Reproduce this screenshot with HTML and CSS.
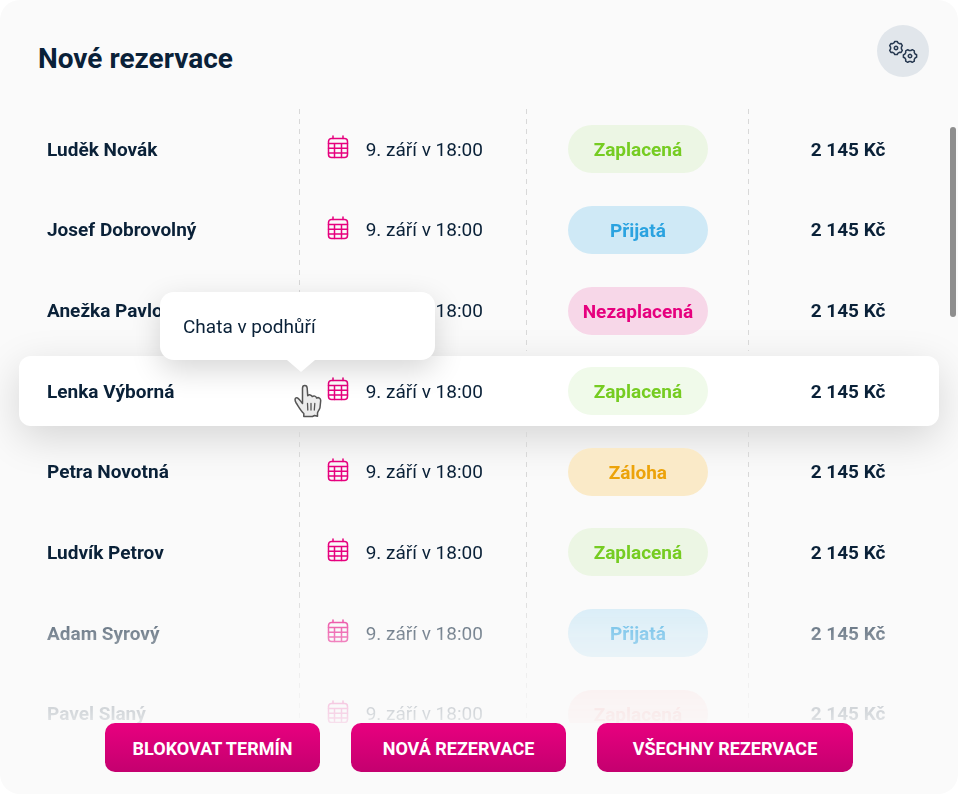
FILE: index.html
```html
<!DOCTYPE html>
<html lang="cs">
<head>
    <meta charset="UTF-8">
    <meta name="viewport" content="width=device-width, initial-scale=1.0">
    <title>Nové rezervace</title>
    <link rel="stylesheet" href="styles.css">
</head>
<body>

<!-- Shared icons -->
<svg class="sprite" aria-hidden="true">
    <symbol id="calendar" viewBox="0 0 22 24">
        <g fill="none" stroke="currentColor" stroke-width="1.5" stroke-linecap="round">
            <rect x="1.5" y="3.5" width="19" height="19" rx="3"/>
            <path d="M6 1v2.5M16 1v2.5M1.5 8.5h19M1.5 13.2h19M1.5 17.9h19M7.5 8.5v14M14.5 8.5v14"/>
        </g>
    </symbol>
    <symbol id="gear" viewBox="-8 -8 16 16">
        <path fill="none" stroke="currentColor" stroke-width="1.5" stroke-linejoin="round" d="M-1.2-6.6H1.2L2-5.1 3.4-4.3 5.1-4.4 6.3-2.3 5.4-.8V.8L6.3 2.3 5.1 4.4 3.4 4.3 2 5.1 1.2 6.6H-1.2L-2 5.1-3.4 4.3-5.1 4.4-6.3 2.3-5.4 .8V-.8L-6.3-2.3-5.1-4.4-3.4-4.3-2-5.1Z"/>
        <circle r="1.7" fill="none" stroke="currentColor" stroke-width="1.5"/>
    </symbol>
</svg>

<main class="card">
    <header class="card-header">
        <h1>Nové rezervace</h1>
        <button class="settings" type="button" aria-label="Nastavení">
            <svg width="32" height="26" viewBox="0 0 32 26">
                <use href="#gear" x="1" y="2" width="16" height="16"/>
                <use href="#gear" x="1" y="2" width="16" height="16" transform="translate(23 18) rotate(30) translate(-9 -10)"/>
            </svg>
        </button>
    </header>

    <div class="list">
        <table class="reservations">
            <tbody>
                <tr>
                    <td class="name">Luděk Novák</td>
                    <td class="date"><div class="date-inner"><svg class="cal"><use href="#calendar"/></svg>9. září v 18:00</div></td>
                    <td class="state"><span class="pill paid">Zaplacená</span></td>
                    <td class="price">2 145 Kč</td>
                </tr>
                <tr>
                    <td class="name">Josef Dobrovolný</td>
                    <td class="date"><div class="date-inner"><svg class="cal"><use href="#calendar"/></svg>9. září v 18:00</div></td>
                    <td class="state"><span class="pill accepted">Přijatá</span></td>
                    <td class="price">2 145 Kč</td>
                </tr>
                <tr>
                    <td class="name">Anežka Pavlová</td>
                    <td class="date"><div class="date-inner"><svg class="cal"><use href="#calendar"/></svg>9. září v 18:00</div></td>
                    <td class="state"><span class="pill unpaid">Nezaplacená</span></td>
                    <td class="price">2 145 Kč</td>
                </tr>
                <tr class="active">
                    <td class="name">
                        Lenka Výborná
                        <div class="tooltip" role="tooltip">Chata v podhůří</div>
                        <svg class="hand" viewBox="0 0 28 34" aria-hidden="true">
                            <path fill="#ececec" stroke="#555" stroke-width="1.5" stroke-linejoin="round" d="M8.5 19.5V4.2C8.5 .6 13 .6 13.2 4.2L13.7 11.8C15 10.3 17.6 10.6 18.2 12.6 19.8 11.4 22.2 12 22.6 14 24.6 13 26.8 14.2 26.7 16.6L26 23.5C25.8 25.5 24 27 23.5 29V32.2L20.5 31.5 18.5 32.5H9.8V29.500C6.500 26.500 4.500 22.500 2.200 19 .2 15.800 1 13 3.600 14 5.400 14.800 6.800 17.800 8.500 19.500Z"/>
                            <path fill="none" stroke="#555" stroke-width="1.3" stroke-linecap="round" d="M13.5 19.5 13.8 26M17 19.3V26M20.8 19.5 20.3 26"/>
                        </svg>
                    </td>
                    <td class="date"><div class="date-inner"><svg class="cal"><use href="#calendar"/></svg>9. září v 18:00</div></td>
                    <td class="state"><span class="pill paid">Zaplacená</span></td>
                    <td class="price">2 145 Kč</td>
                </tr>
                <tr>
                    <td class="name">Petra Novotná</td>
                    <td class="date"><div class="date-inner"><svg class="cal"><use href="#calendar"/></svg>9. září v 18:00</div></td>
                    <td class="state"><span class="pill deposit">Záloha</span></td>
                    <td class="price">2 145 Kč</td>
                </tr>
                <tr>
                    <td class="name">Ludvík Petrov</td>
                    <td class="date"><div class="date-inner"><svg class="cal"><use href="#calendar"/></svg>9. září v 18:00</div></td>
                    <td class="state"><span class="pill paid">Zaplacená</span></td>
                    <td class="price">2 145 Kč</td>
                </tr>
                <tr>
                    <td class="name">Adam Syrový</td>
                    <td class="date"><div class="date-inner"><svg class="cal"><use href="#calendar"/></svg>9. září v 18:00</div></td>
                    <td class="state"><span class="pill accepted">Přijatá</span></td>
                    <td class="price">2 145 Kč</td>
                </tr>
                <tr>
                    <td class="name">Pavel Slaný</td>
                    <td class="date"><div class="date-inner"><svg class="cal"><use href="#calendar"/></svg>9. září v 18:00</div></td>
                    <td class="state"><span class="pill overdue">Zaplacená</span></td>
                    <td class="price">2 145 Kč</td>
                </tr>
            </tbody>
        </table>
        <div class="scroll-thumb"></div>
    </div>

    <footer class="actions">
        <button class="btn" type="button">Blokovat termín</button>
        <button class="btn" type="button">Nová rezervace</button>
        <button class="btn btn-wide" type="button">Všechny rezervace</button>
    </footer>
</main>

</body>
</html>
```
FILE: styles.css
```css
* {
    box-sizing: border-box;
}

body {
    margin: 0;
    background: #fff;
    color: #0a2138;
    font-family: Roboto, "Liberation Sans", sans-serif;
    font-size: 19px;
}

button {
    border: none;
    font-family: inherit;
    cursor: pointer;
}

.sprite {
    display: none;
}

.card {
    display: flex;
    flex-direction: column;
    height: 100vh;
    background: #fafafa;
    border-radius: 20px;
}

.card-header {
    display: flex;
    justify-content: space-between;
    align-items: flex-start;
    height: 107px;
    padding: 25px 29px 0 38px;
}

h1 {
    margin: 0;
    padding-top: 16px;
    font-size: 28px;
    line-height: 36px;
    font-weight: 700;
}

.settings {
    display: flex;
    align-items: center;
    justify-content: center;
    width: 52px;
    height: 52px;
    padding: 0;
    border-radius: 50%;
    background: #e1e6eb;
    color: #263850;
}

/* Reservation list */
.list {
    position: relative;
    flex: 1;
    min-height: 0;
    overflow: hidden;
    padding: 2px 19px 0;
    -webkit-mask-image: linear-gradient(#000 470px, rgba(0, 0, 0, 0.5) 530px, rgba(0, 0, 0, 0.1) 616px);
    mask-image: linear-gradient(#000 470px, rgba(0, 0, 0, 0.5) 530px, rgba(0, 0, 0, 0.1) 616px);
}

.reservations {
    width: 100%;
    height: 645px;
    border-collapse: collapse;
    table-layout: fixed;
}

td {
    padding: 0;
    white-space: nowrap;
}

td + td {
    background: repeating-linear-gradient(#d8d8d8 0 5px, transparent 5px 10px) left top / 1px 100% no-repeat;
}

.name {
    width: 30.4%;
    padding-left: 28px;
    font-weight: 700;
}

.date {
    width: 24.7%;
    padding-left: 28px;
}

.date-inner {
    display: flex;
    align-items: center;
    gap: 17px;
}

.cal {
    width: 22px;
    height: 24px;
    margin-bottom: 4px;
    color: #e6007e;
}

.state {
    width: 24.1%;
    padding-left: 42px;
}

.price {
    width: 20.8%;
    padding-left: 63px;
    font-weight: 700;
}

.pill {
    display: block;
    width: 140px;
    height: 48px;
    padding-top: 1px;
    border-radius: 24px;
    font-weight: 700;
    line-height: 48px;
    text-align: center;
}

.paid {
    background: #ecf6e4;
    color: #76cc22;
}

.accepted {
    background: #cfe9f6;
    color: #2ba3e0;
}

.unpaid {
    background: #f7d7e8;
    color: #e6007e;
}

.deposit {
    background: #faeac8;
    color: #eca30a;
}

.overdue {
    background: #fcdcdc;
    color: #f59a9a;
}

/* Highlighted row */
.active {
    position: relative;
}

.active .name::before {
    content: "";
    position: absolute;
    inset: 5px 0 6px;
    z-index: -1;
    border-radius: 12px;
    background: #fff;
    box-shadow: 0 12px 40px rgba(0, 0, 0, 0.15);
}

.active td {
    background: none;
}

.active .paid {
    background: #f0faea;
}

.tooltip {
    position: absolute;
    bottom: 72px;
    left: 141px;
    z-index: 2;
    width: 275px;
    padding: 23px 23px 21px;
    border-radius: 14px;
    background: #fff;
    box-shadow: 0 10px 30px rgba(0, 0, 0, 0.16);
    font-weight: 400;
    line-height: 24px;
}

.tooltip::after {
    content: "";
    position: absolute;
    top: 100%;
    left: 127px;
    border: 14px solid transparent;
    border-top: 12px solid #fff;
    border-bottom: 0;
}

.hand {
    position: absolute;
    top: 33px;
    left: 275px;
    z-index: 3;
    width: 28px;
    height: 34px;
}

.scroll-thumb {
    position: absolute;
    top: 20px;
    right: 2px;
    width: 6px;
    height: 190px;
    border-radius: 3px;
    background: #8e8e8e;
}

/* Buttons */
.actions {
    display: flex;
    justify-content: center;
    gap: 31px;
    padding-bottom: 22px;
}

.btn {
    width: 215px;
    height: 49px;
    padding: 2px 0 0;
    border-radius: 10px;
    background: linear-gradient(#e8007f, #c4006f);
    color: #fff;
    font-size: 18px;
    font-weight: 700;
    text-transform: uppercase;
}

.btn-wide {
    width: 256px;
}
```
